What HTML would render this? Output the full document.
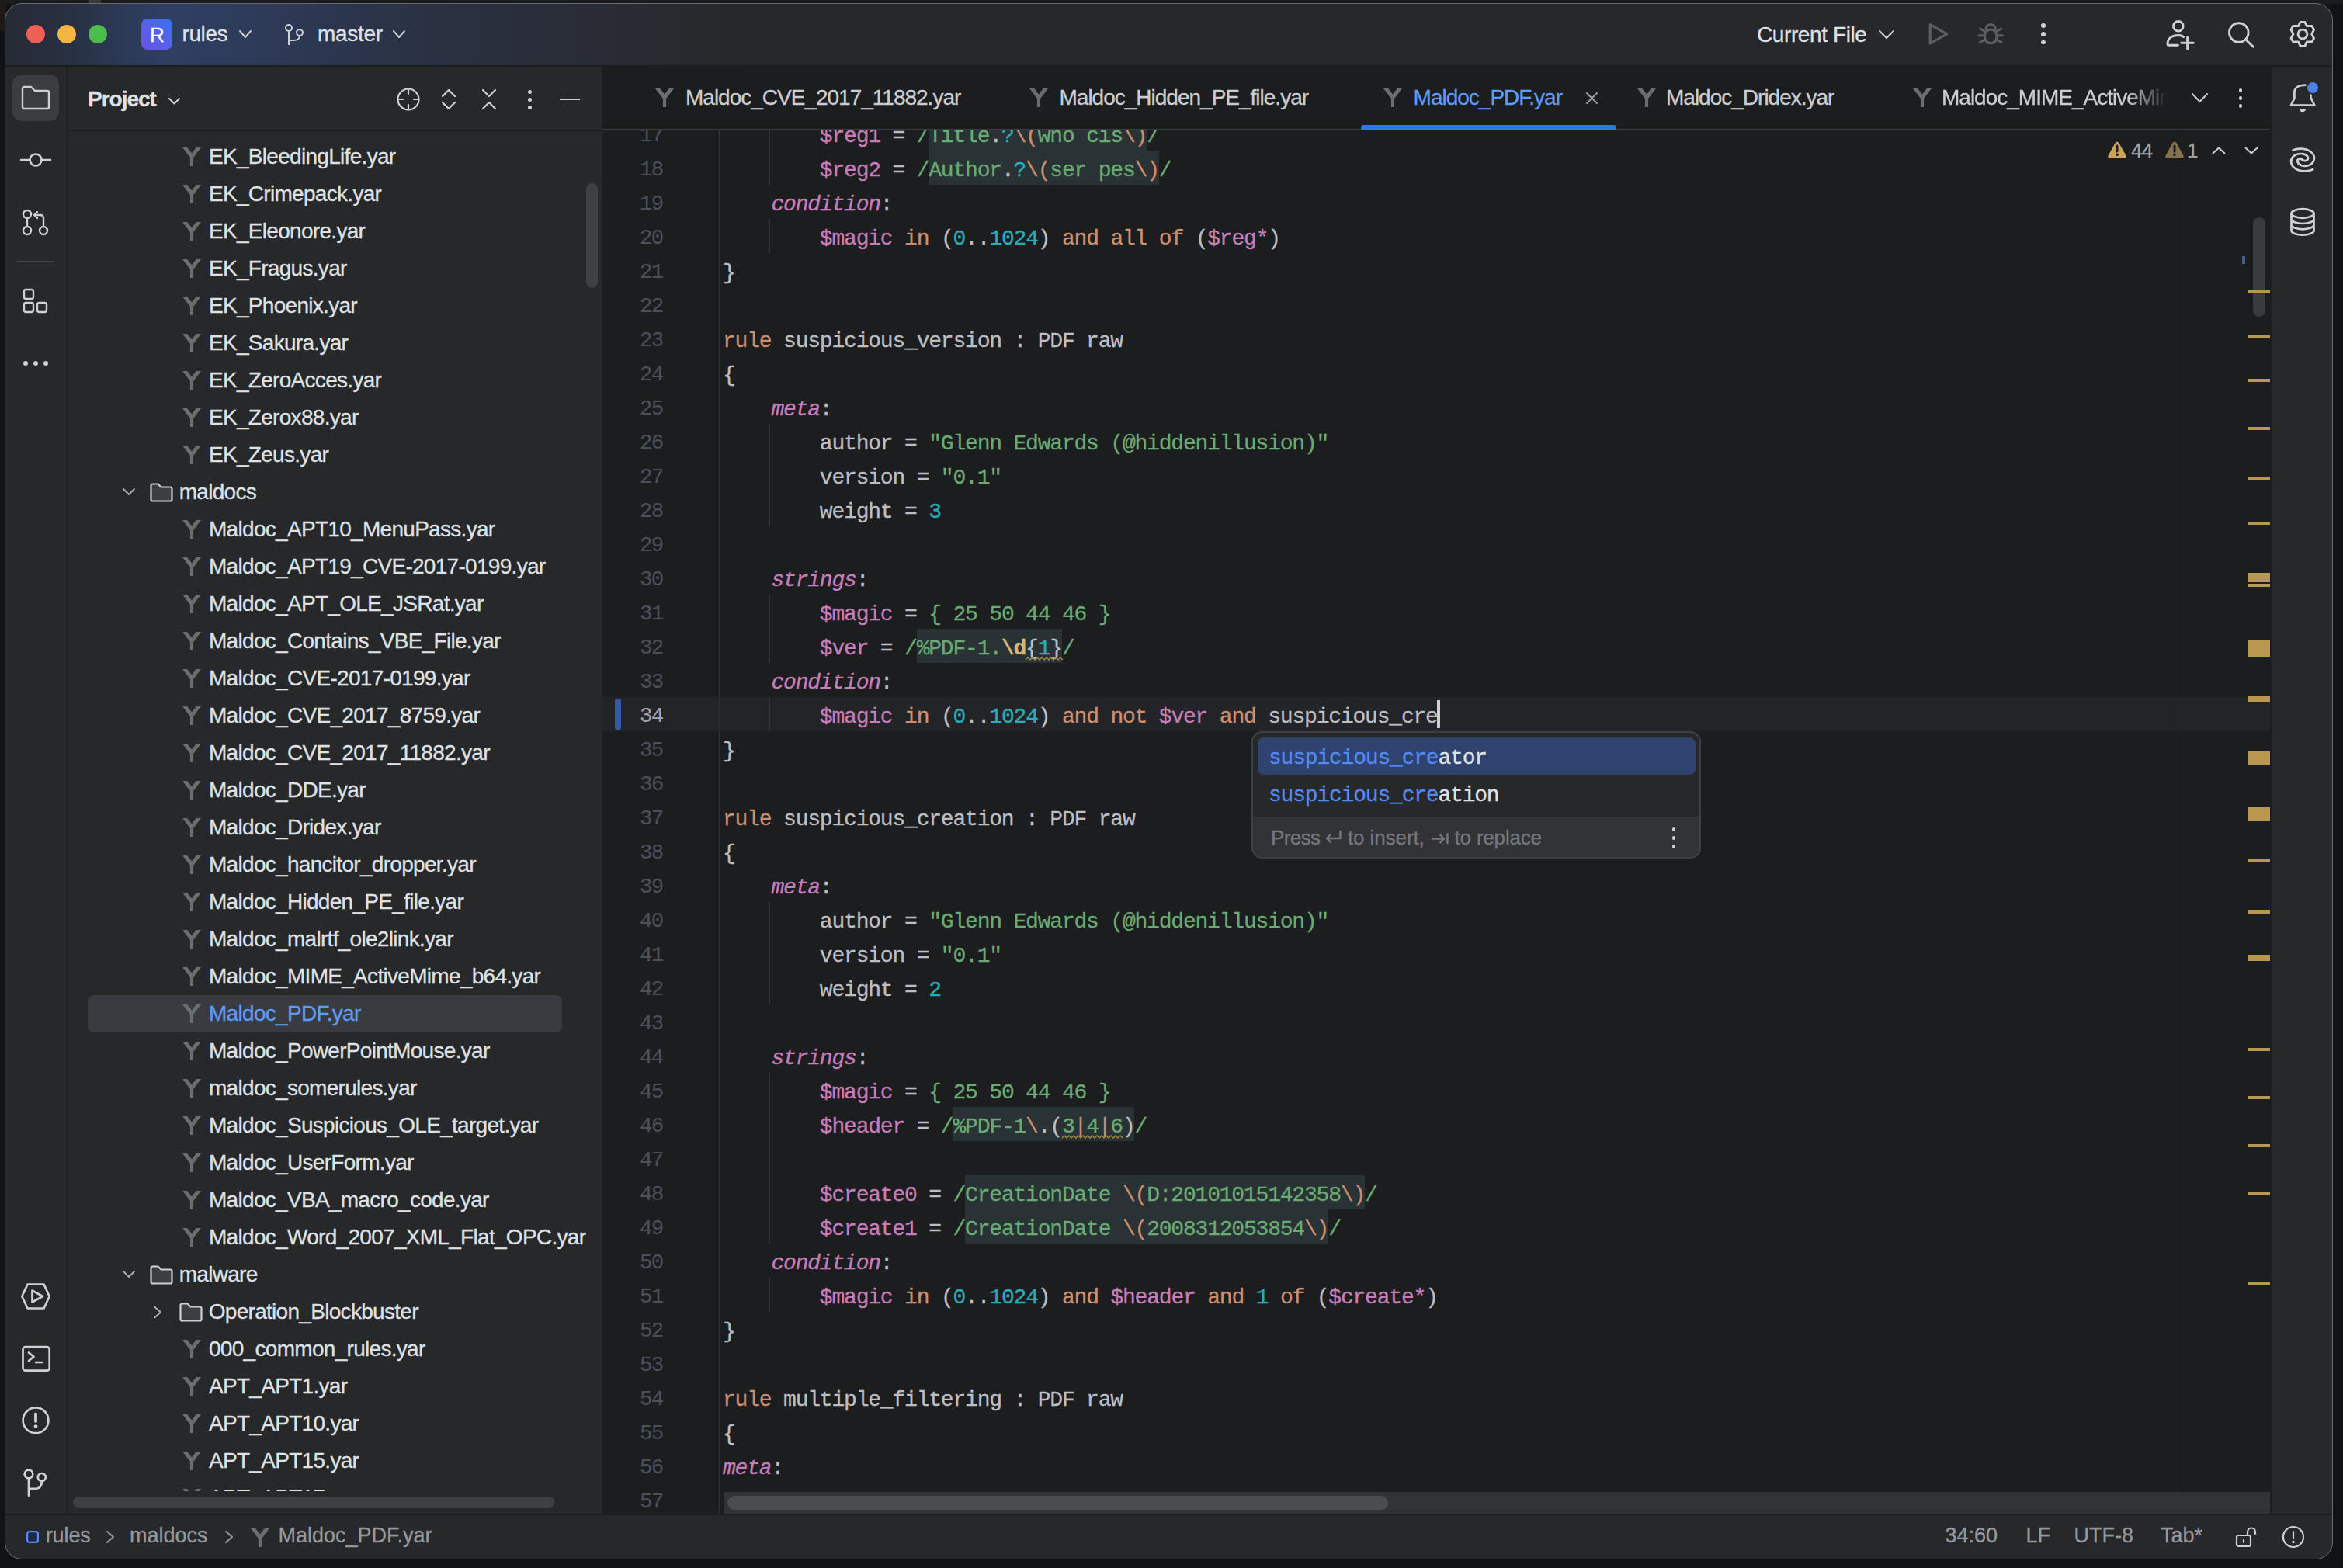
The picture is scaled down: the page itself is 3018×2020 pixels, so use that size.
<!DOCTYPE html><html><head><meta charset="utf-8"><style>
html,body{margin:0;padding:0;}
body{width:3018px;height:2020px;position:relative;overflow:hidden;background:#111213;font-family:"Liberation Sans",sans-serif;-webkit-text-stroke:0.3px currentColor;}
.abs{position:absolute;}
svg{position:absolute;overflow:visible;}
</style></head><body>
<div class="abs" style="left:0;top:0;width:3018px;height:5px;background:#1a1b1d"></div>
<div class="abs" style="left:0;top:0;width:8px;height:40px;background:#1f1a19"></div>
<div class="abs" style="left:114px;top:0;width:16px;height:4px;background:#3a3a3c"></div>
<div class="abs" style="left:0;top:0;width:3018px;height:2020px;clip-path:inset(4px 13px 11px 6px round 22px);background:#27282a">
<div class="abs" style="left:0;top:0;width:3018px;height:84px;background:#27282b"></div>
<div class="abs" style="left:0;top:0;width:3018px;height:84px;background:linear-gradient(90deg,#262a33 0px,#283042 90px,#2d3b5a 170px,#2f3f62 215px,#2e3c5c 300px,#2c364f 420px,#2a3142 560px,#292d37 720px,rgba(43,45,48,0) 950px)"></div>
<div class="abs" style="left:0;top:84px;width:3018px;height:2px;background:#1c1d1f"></div>
<div class="abs" style="left:34px;top:32px;width:24px;height:24px;border-radius:50%;background:#ef5f56"></div>
<div class="abs" style="left:74px;top:32px;width:24px;height:24px;border-radius:50%;background:#f5b543"></div>
<div class="abs" style="left:114px;top:32px;width:24px;height:24px;border-radius:50%;background:#4cbc4a"></div>
<div class="abs" style="left:182px;top:24px;width:40px;height:40px;border-radius:8px;background:linear-gradient(225deg,#3574f0 0%,#5b5ee6 60%,#6b52e0 100%)"></div>
<div style="position:absolute;left:193px;top:27.99px;height:34px;line-height:34px;font-family:'Liberation Sans', sans-serif;font-size:26px;color:#ffffff;font-weight:normal;white-space:pre;letter-spacing:-0.65px;width:18px;text-align:center">R</div>
<div style="position:absolute;left:234.5px;top:26.30px;height:36px;line-height:36px;font-family:'Liberation Sans', sans-serif;font-size:28px;color:#dfe1e5;font-weight:normal;white-space:pre;letter-spacing:-0.4px;">rules</div>
<svg style="left:308px;top:39px" width="16" height="10"><polyline points="1,1 8.0,9 15,1" fill="none" stroke="#ced0d6" stroke-width="2" stroke-linecap="round" stroke-linejoin="round"/></svg>
<svg style="left:366px;top:30px" width="28" height="30" viewBox="0 0 28 30"><circle cx="6" cy="6" r="4" fill="none" stroke="#ced0d6" stroke-width="2"/><circle cx="20" cy="12" r="4" fill="none" stroke="#ced0d6" stroke-width="2"/><path d="M6 10 V28 M6 22 H12 Q20 22 20 16" fill="none" stroke="#ced0d6" stroke-width="2"/></svg>
<div style="position:absolute;left:409px;top:26.30px;height:36px;line-height:36px;font-family:'Liberation Sans', sans-serif;font-size:28px;color:#dfe1e5;font-weight:normal;white-space:pre;letter-spacing:-0.3px;">master</div>
<svg style="left:506px;top:39px" width="16" height="10"><polyline points="1,1 8.0,9 15,1" fill="none" stroke="#ced0d6" stroke-width="2" stroke-linecap="round" stroke-linejoin="round"/></svg>
<div style="position:absolute;left:2263px;top:27.10px;height:36px;line-height:36px;font-family:'Liberation Sans', sans-serif;font-size:28px;color:#dfe1e5;font-weight:normal;white-space:pre;letter-spacing:-0.4px;">Current File</div>
<svg style="left:2420px;top:39px" width="20" height="11"><polyline points="1,1 10.0,10 19,1" fill="none" stroke="#ced0d6" stroke-width="2" stroke-linecap="round" stroke-linejoin="round"/></svg>
<svg style="left:2482px;top:28px" width="30" height="32"><path d="M4.2 3.6 L25.7 15.8 L4.2 28 Z" fill="none" stroke="#5c5e62" stroke-width="3.1" stroke-linejoin="round"/></svg>
<svg style="left:2546px;top:27px" width="36" height="34" viewBox="0 0 36 34"><g fill="none" stroke="#5c5e62" stroke-width="3" stroke-linecap="round">
<path d="M12.2 10.5 A6 6 0 0 1 24.2 10.5"/><rect x="10.6" y="11" width="15.2" height="17.8" rx="7.6"/>
<path d="M4.3 10 L10 13 M3 18.8 H9.5 M4 27.7 L10 24.5 M32.1 10 L26.4 13 M33.4 18.8 H26.9 M32.4 27.7 L26.4 24.5"/></g></svg>
<div class="abs" style="left:2629.2px;top:30.400000000000002px;width:5.6px;height:5.6px;border-radius:50%;background:#ced0d6"></div>
<div class="abs" style="left:2629.2px;top:41.2px;width:5.6px;height:5.6px;border-radius:50%;background:#ced0d6"></div>
<div class="abs" style="left:2629.2px;top:51.900000000000006px;width:5.6px;height:5.6px;border-radius:50%;background:#ced0d6"></div>
<svg style="left:2786px;top:24px" width="44" height="44" viewBox="0 0 44 44"><g fill="none" stroke="#ced0d6" stroke-width="2.9" stroke-linecap="round" stroke-linejoin="round">
<circle cx="19.8" cy="9.8" r="6.3"/><path d="M19.5 34.2 H7.5 Q6 34.2 6 32.7 C6 26 11 21.5 20 21.5 Q24 21.5 26.5 23.5"/><path d="M31.6 23.9 V39 M23.7 31.2 H39.4"/></g></svg>
<svg style="left:2866px;top:24px" width="40" height="40" viewBox="0 0 40 40"><g fill="none" stroke="#ced0d6" stroke-width="2.9" stroke-linecap="round">
<circle cx="17.8" cy="18" r="12.3"/><path d="M27 27.3 L36.3 36.3"/></g></svg>
<svg style="left:2946px;top:24px" width="40" height="40" viewBox="0 0 40 40"><polygon points="17.05,4.42 22.85,4.42 25.41,9.55 31.97,9.55 34.53,14.30 31.78,19.90 34.53,25.51 31.97,29.88 25.41,29.88 22.85,35.39 17.05,35.39 14.49,29.88 7.65,29.88 5.09,25.51 7.94,19.90 5.09,14.30 7.65,9.55 14.49,9.55" fill="none" stroke="#ced0d6" stroke-width="2.9" stroke-linejoin="round"/><circle cx="20" cy="20" r="5.9" fill="none" stroke="#ced0d6" stroke-width="2.9"/></svg>
<div class="abs" style="left:86px;top:86px;width:2px;height:1866px;background:#1c1d1f"></div>
<div class="abs" style="left:16px;top:96px;width:60px;height:60px;border-radius:12px;background:#3b3c3f"></div>
<svg style="left:27px;top:110px" width="38" height="32" viewBox="0 0 38 32"><path d="M2 4 Q2 2 4 2 H13 L18 7 H34 Q36 7 36 9 V28 Q36 30 34 30 H4 Q2 30 2 28 Z" fill="none" stroke="#ced0d6" stroke-width="2.4" stroke-linejoin="round"/></svg>
<svg style="left:24px;top:194px" width="44" height="24"><circle cx="22" cy="12" r="7.5" fill="none" stroke="#ced0d6" stroke-width="2.6"/><path d="M3 12 H14.5 M29.5 12 H41" stroke="#ced0d6" stroke-width="2.6" stroke-linecap="round"/></svg>
<svg style="left:28px;top:269px" width="36" height="36" viewBox="0 0 36 36"><g fill="none" stroke="#ced0d6" stroke-width="2.4" stroke-linecap="round" stroke-linejoin="round">
<circle cx="7" cy="7" r="5"/><circle cx="7" cy="28" r="5"/><circle cx="28" cy="28" r="5"/><path d="M7 12 V23"/><path d="M28 23 V12 Q28 8 24 8 H17 M20 4 L16 8 L20 12"/></g></svg>
<div class="abs" style="left:22px;top:336px;width:48px;height:2px;background:#43454a"></div>
<svg style="left:28px;top:370px" width="36" height="36" viewBox="0 0 36 36"><g fill="none" stroke="#ced0d6" stroke-width="2.4" stroke-linejoin="round">
<rect x="3" y="3" width="12" height="12" rx="2.5"/><rect x="3" y="20" width="12" height="12" rx="2.5"/><rect x="20" y="20" width="12" height="12" rx="2.5"/></g></svg>
<div class="abs" style="left:30px;top:464.5px;width:6px;height:6px;border-radius:50%;background:#ced0d6"></div>
<div class="abs" style="left:43px;top:464.5px;width:6px;height:6px;border-radius:50%;background:#ced0d6"></div>
<div class="abs" style="left:56px;top:464.5px;width:6px;height:6px;border-radius:50%;background:#ced0d6"></div>
<svg style="left:24px;top:1650px" width="44" height="40" viewBox="0 0 44 40"><g fill="none" stroke="#ced0d6" stroke-width="2.7" stroke-linejoin="round" stroke-linecap="round">
<path d="M4.3 20 L11.5 4.5 H32.5 L39.7 20 L32.5 35.5 H11.5 Z"/><path d="M17.5 12.5 L31 20 L17.5 27.5 Z"/></g></svg>
<svg style="left:26px;top:1732px" width="40" height="38" viewBox="0 0 40 38"><g fill="none" stroke="#ced0d6" stroke-width="2.7" stroke-linecap="round" stroke-linejoin="round">
<rect x="3.5" y="3.2" width="34.2" height="30.5" rx="3.5"/><path d="M11 10.5 L17.5 15.8 L11 21 M20 23 H28.5"/></g></svg>
<svg style="left:26px;top:1810px" width="40" height="40" viewBox="0 0 40 40"><circle cx="20" cy="19.8" r="16.4" fill="none" stroke="#ced0d6" stroke-width="2.7"/><path d="M20 11.5 V21" stroke="#ced0d6" stroke-width="3.8" stroke-linecap="round"/><circle cx="20" cy="27.6" r="2.4" fill="#ced0d6"/></svg>
<svg style="left:26px;top:1888px" width="40" height="44" viewBox="0 0 40 44"><g fill="none" stroke="#ced0d6" stroke-width="2.7" stroke-linecap="round">
<circle cx="11" cy="11" r="5.3"/><circle cx="27.8" cy="15" r="5"/><path d="M11 16.3 V38.7 M27.8 20 Q27.8 29.8 20 29.8 H11"/></g></svg>
<div class="abs" style="left:88px;top:167px;width:688px;height:2px;background:#1c1d1f"></div>
<div style="position:absolute;left:113px;top:110.10px;height:36px;line-height:36px;font-family:'Liberation Sans', sans-serif;font-size:28px;color:#dfe1e5;font-weight:bold;white-space:pre;letter-spacing:-1.0px;">Project</div>
<svg style="left:217px;top:126px" width="15" height="8.5"><polyline points="1,1 7.5,7.5 14,1" fill="none" stroke="#ced0d6" stroke-width="2" stroke-linecap="round" stroke-linejoin="round"/></svg>
<svg style="left:510px;top:112px" width="32" height="32" viewBox="0 0 32 32"><g fill="none" stroke="#ced0d6" stroke-width="2.2" stroke-linecap="round">
<circle cx="16" cy="16" r="13.5"/><path d="M16 3 V9 M16 23 V29 M3 16 H9 M23 16 H29"/></g></svg>
<svg style="left:568px;top:113px" width="20" height="30" viewBox="0 0 20 30"><g fill="none" stroke="#ced0d6" stroke-width="2.2" stroke-linecap="round" stroke-linejoin="round">
<path d="M2 11 L10 3 L18 11 M2 19 L10 27 L18 19"/></g></svg>
<svg style="left:620px;top:114px" width="20" height="28" viewBox="0 0 20 28"><g fill="none" stroke="#ced0d6" stroke-width="2.2" stroke-linecap="round" stroke-linejoin="round">
<path d="M2 2 L10 10 L18 2 M2 26 L10 18 L18 26"/></g></svg>
<div class="abs" style="left:679.5px;top:115.5px;width:5px;height:5px;border-radius:50%;background:#ced0d6"></div>
<div class="abs" style="left:679.5px;top:125.5px;width:5px;height:5px;border-radius:50%;background:#ced0d6"></div>
<div class="abs" style="left:679.5px;top:135.5px;width:5px;height:5px;border-radius:50%;background:#ced0d6"></div>
<div class="abs" style="left:721px;top:127px;width:26px;height:2.4px;background:#ced0d6"></div>
<div class="abs" style="left:88px;top:169px;width:688px;height:1752px;overflow:hidden">
<svg style="left:146.5px;top:21px" width="24" height="24" viewBox="0 0 24 24"><path d="M0 0 H6.2 L12 7.6 L17.8 0 H24 L14.1 13 V24 H9.9 V13 Z" fill="#6c6d6f"/></svg>
<div style="position:absolute;left:181px;top:14.80px;height:36px;line-height:36px;font-family:'Liberation Sans', sans-serif;font-size:28px;color:#dfe1e5;font-weight:normal;white-space:pre;letter-spacing:-0.7px;">EK_BleedingLife.yar</div>
<svg style="left:146.5px;top:69px" width="24" height="24" viewBox="0 0 24 24"><path d="M0 0 H6.2 L12 7.6 L17.8 0 H24 L14.1 13 V24 H9.9 V13 Z" fill="#6c6d6f"/></svg>
<div style="position:absolute;left:181px;top:62.80px;height:36px;line-height:36px;font-family:'Liberation Sans', sans-serif;font-size:28px;color:#dfe1e5;font-weight:normal;white-space:pre;letter-spacing:-0.7px;">EK_Crimepack.yar</div>
<svg style="left:146.5px;top:117px" width="24" height="24" viewBox="0 0 24 24"><path d="M0 0 H6.2 L12 7.6 L17.8 0 H24 L14.1 13 V24 H9.9 V13 Z" fill="#6c6d6f"/></svg>
<div style="position:absolute;left:181px;top:110.80px;height:36px;line-height:36px;font-family:'Liberation Sans', sans-serif;font-size:28px;color:#dfe1e5;font-weight:normal;white-space:pre;letter-spacing:-0.7px;">EK_Eleonore.yar</div>
<svg style="left:146.5px;top:165px" width="24" height="24" viewBox="0 0 24 24"><path d="M0 0 H6.2 L12 7.6 L17.8 0 H24 L14.1 13 V24 H9.9 V13 Z" fill="#6c6d6f"/></svg>
<div style="position:absolute;left:181px;top:158.80px;height:36px;line-height:36px;font-family:'Liberation Sans', sans-serif;font-size:28px;color:#dfe1e5;font-weight:normal;white-space:pre;letter-spacing:-0.7px;">EK_Fragus.yar</div>
<svg style="left:146.5px;top:213px" width="24" height="24" viewBox="0 0 24 24"><path d="M0 0 H6.2 L12 7.6 L17.8 0 H24 L14.1 13 V24 H9.9 V13 Z" fill="#6c6d6f"/></svg>
<div style="position:absolute;left:181px;top:206.80px;height:36px;line-height:36px;font-family:'Liberation Sans', sans-serif;font-size:28px;color:#dfe1e5;font-weight:normal;white-space:pre;letter-spacing:-0.7px;">EK_Phoenix.yar</div>
<svg style="left:146.5px;top:261px" width="24" height="24" viewBox="0 0 24 24"><path d="M0 0 H6.2 L12 7.6 L17.8 0 H24 L14.1 13 V24 H9.9 V13 Z" fill="#6c6d6f"/></svg>
<div style="position:absolute;left:181px;top:254.80px;height:36px;line-height:36px;font-family:'Liberation Sans', sans-serif;font-size:28px;color:#dfe1e5;font-weight:normal;white-space:pre;letter-spacing:-0.7px;">EK_Sakura.yar</div>
<svg style="left:146.5px;top:309px" width="24" height="24" viewBox="0 0 24 24"><path d="M0 0 H6.2 L12 7.6 L17.8 0 H24 L14.1 13 V24 H9.9 V13 Z" fill="#6c6d6f"/></svg>
<div style="position:absolute;left:181px;top:302.80px;height:36px;line-height:36px;font-family:'Liberation Sans', sans-serif;font-size:28px;color:#dfe1e5;font-weight:normal;white-space:pre;letter-spacing:-0.7px;">EK_ZeroAcces.yar</div>
<svg style="left:146.5px;top:357px" width="24" height="24" viewBox="0 0 24 24"><path d="M0 0 H6.2 L12 7.6 L17.8 0 H24 L14.1 13 V24 H9.9 V13 Z" fill="#6c6d6f"/></svg>
<div style="position:absolute;left:181px;top:350.80px;height:36px;line-height:36px;font-family:'Liberation Sans', sans-serif;font-size:28px;color:#dfe1e5;font-weight:normal;white-space:pre;letter-spacing:-0.7px;">EK_Zerox88.yar</div>
<svg style="left:146.5px;top:405px" width="24" height="24" viewBox="0 0 24 24"><path d="M0 0 H6.2 L12 7.6 L17.8 0 H24 L14.1 13 V24 H9.9 V13 Z" fill="#6c6d6f"/></svg>
<div style="position:absolute;left:181px;top:398.80px;height:36px;line-height:36px;font-family:'Liberation Sans', sans-serif;font-size:28px;color:#dfe1e5;font-weight:normal;white-space:pre;letter-spacing:-0.7px;">EK_Zeus.yar</div>
<svg style="left:70px;top:460px" width="16" height="9"><polyline points="1,1 8.0,8 15,1" fill="none" stroke="#a9acb1" stroke-width="2" stroke-linecap="round" stroke-linejoin="round"/></svg>
<svg style="left:105px;top:452.5px" width="30" height="25" viewBox="0 0 30 25"><path d="M1.5 3.5 Q1.5 1.5 3.5 1.5 H10.5 L14.5 5.5 H26.5 Q28.5 5.5 28.5 7.5 V21.5 Q28.5 23.5 26.5 23.5 H3.5 Q1.5 23.5 1.5 21.5 Z" fill="#3c3e42" stroke="#ced0d6" stroke-width="2.2" stroke-linejoin="round"/></svg>
<div style="position:absolute;left:142.7px;top:446.80px;height:36px;line-height:36px;font-family:'Liberation Sans', sans-serif;font-size:28px;color:#dfe1e5;font-weight:normal;white-space:pre;letter-spacing:-0.7px;">maldocs</div>
<svg style="left:146.5px;top:501px" width="24" height="24" viewBox="0 0 24 24"><path d="M0 0 H6.2 L12 7.6 L17.8 0 H24 L14.1 13 V24 H9.9 V13 Z" fill="#6c6d6f"/></svg>
<div style="position:absolute;left:181px;top:494.80px;height:36px;line-height:36px;font-family:'Liberation Sans', sans-serif;font-size:28px;color:#dfe1e5;font-weight:normal;white-space:pre;letter-spacing:-0.7px;">Maldoc_APT10_MenuPass.yar</div>
<svg style="left:146.5px;top:549px" width="24" height="24" viewBox="0 0 24 24"><path d="M0 0 H6.2 L12 7.6 L17.8 0 H24 L14.1 13 V24 H9.9 V13 Z" fill="#6c6d6f"/></svg>
<div style="position:absolute;left:181px;top:542.80px;height:36px;line-height:36px;font-family:'Liberation Sans', sans-serif;font-size:28px;color:#dfe1e5;font-weight:normal;white-space:pre;letter-spacing:-0.7px;">Maldoc_APT19_CVE-2017-0199.yar</div>
<svg style="left:146.5px;top:597px" width="24" height="24" viewBox="0 0 24 24"><path d="M0 0 H6.2 L12 7.6 L17.8 0 H24 L14.1 13 V24 H9.9 V13 Z" fill="#6c6d6f"/></svg>
<div style="position:absolute;left:181px;top:590.80px;height:36px;line-height:36px;font-family:'Liberation Sans', sans-serif;font-size:28px;color:#dfe1e5;font-weight:normal;white-space:pre;letter-spacing:-0.7px;">Maldoc_APT_OLE_JSRat.yar</div>
<svg style="left:146.5px;top:645px" width="24" height="24" viewBox="0 0 24 24"><path d="M0 0 H6.2 L12 7.6 L17.8 0 H24 L14.1 13 V24 H9.9 V13 Z" fill="#6c6d6f"/></svg>
<div style="position:absolute;left:181px;top:638.80px;height:36px;line-height:36px;font-family:'Liberation Sans', sans-serif;font-size:28px;color:#dfe1e5;font-weight:normal;white-space:pre;letter-spacing:-0.7px;">Maldoc_Contains_VBE_File.yar</div>
<svg style="left:146.5px;top:693px" width="24" height="24" viewBox="0 0 24 24"><path d="M0 0 H6.2 L12 7.6 L17.8 0 H24 L14.1 13 V24 H9.9 V13 Z" fill="#6c6d6f"/></svg>
<div style="position:absolute;left:181px;top:686.80px;height:36px;line-height:36px;font-family:'Liberation Sans', sans-serif;font-size:28px;color:#dfe1e5;font-weight:normal;white-space:pre;letter-spacing:-0.7px;">Maldoc_CVE-2017-0199.yar</div>
<svg style="left:146.5px;top:741px" width="24" height="24" viewBox="0 0 24 24"><path d="M0 0 H6.2 L12 7.6 L17.8 0 H24 L14.1 13 V24 H9.9 V13 Z" fill="#6c6d6f"/></svg>
<div style="position:absolute;left:181px;top:734.80px;height:36px;line-height:36px;font-family:'Liberation Sans', sans-serif;font-size:28px;color:#dfe1e5;font-weight:normal;white-space:pre;letter-spacing:-0.7px;">Maldoc_CVE_2017_8759.yar</div>
<svg style="left:146.5px;top:789px" width="24" height="24" viewBox="0 0 24 24"><path d="M0 0 H6.2 L12 7.6 L17.8 0 H24 L14.1 13 V24 H9.9 V13 Z" fill="#6c6d6f"/></svg>
<div style="position:absolute;left:181px;top:782.80px;height:36px;line-height:36px;font-family:'Liberation Sans', sans-serif;font-size:28px;color:#dfe1e5;font-weight:normal;white-space:pre;letter-spacing:-0.7px;">Maldoc_CVE_2017_11882.yar</div>
<svg style="left:146.5px;top:837px" width="24" height="24" viewBox="0 0 24 24"><path d="M0 0 H6.2 L12 7.6 L17.8 0 H24 L14.1 13 V24 H9.9 V13 Z" fill="#6c6d6f"/></svg>
<div style="position:absolute;left:181px;top:830.80px;height:36px;line-height:36px;font-family:'Liberation Sans', sans-serif;font-size:28px;color:#dfe1e5;font-weight:normal;white-space:pre;letter-spacing:-0.7px;">Maldoc_DDE.yar</div>
<svg style="left:146.5px;top:885px" width="24" height="24" viewBox="0 0 24 24"><path d="M0 0 H6.2 L12 7.6 L17.8 0 H24 L14.1 13 V24 H9.9 V13 Z" fill="#6c6d6f"/></svg>
<div style="position:absolute;left:181px;top:878.80px;height:36px;line-height:36px;font-family:'Liberation Sans', sans-serif;font-size:28px;color:#dfe1e5;font-weight:normal;white-space:pre;letter-spacing:-0.7px;">Maldoc_Dridex.yar</div>
<svg style="left:146.5px;top:933px" width="24" height="24" viewBox="0 0 24 24"><path d="M0 0 H6.2 L12 7.6 L17.8 0 H24 L14.1 13 V24 H9.9 V13 Z" fill="#6c6d6f"/></svg>
<div style="position:absolute;left:181px;top:926.80px;height:36px;line-height:36px;font-family:'Liberation Sans', sans-serif;font-size:28px;color:#dfe1e5;font-weight:normal;white-space:pre;letter-spacing:-0.7px;">Maldoc_hancitor_dropper.yar</div>
<svg style="left:146.5px;top:981px" width="24" height="24" viewBox="0 0 24 24"><path d="M0 0 H6.2 L12 7.6 L17.8 0 H24 L14.1 13 V24 H9.9 V13 Z" fill="#6c6d6f"/></svg>
<div style="position:absolute;left:181px;top:974.80px;height:36px;line-height:36px;font-family:'Liberation Sans', sans-serif;font-size:28px;color:#dfe1e5;font-weight:normal;white-space:pre;letter-spacing:-0.7px;">Maldoc_Hidden_PE_file.yar</div>
<svg style="left:146.5px;top:1029px" width="24" height="24" viewBox="0 0 24 24"><path d="M0 0 H6.2 L12 7.6 L17.8 0 H24 L14.1 13 V24 H9.9 V13 Z" fill="#6c6d6f"/></svg>
<div style="position:absolute;left:181px;top:1022.80px;height:36px;line-height:36px;font-family:'Liberation Sans', sans-serif;font-size:28px;color:#dfe1e5;font-weight:normal;white-space:pre;letter-spacing:-0.7px;">Maldoc_malrtf_ole2link.yar</div>
<svg style="left:146.5px;top:1077px" width="24" height="24" viewBox="0 0 24 24"><path d="M0 0 H6.2 L12 7.6 L17.8 0 H24 L14.1 13 V24 H9.9 V13 Z" fill="#6c6d6f"/></svg>
<div style="position:absolute;left:181px;top:1070.80px;height:36px;line-height:36px;font-family:'Liberation Sans', sans-serif;font-size:28px;color:#dfe1e5;font-weight:normal;white-space:pre;letter-spacing:-0.7px;">Maldoc_MIME_ActiveMime_b64.yar</div>
<div class="abs" style="left:24.5px;top:1113px;width:611px;height:48px;border-radius:8px;background:#393b40"></div>
<svg style="left:146.5px;top:1125px" width="24" height="24" viewBox="0 0 24 24"><path d="M0 0 H6.2 L12 7.6 L17.8 0 H24 L14.1 13 V24 H9.9 V13 Z" fill="#6c6d6f"/></svg>
<div style="position:absolute;left:181px;top:1118.80px;height:36px;line-height:36px;font-family:'Liberation Sans', sans-serif;font-size:28px;color:#5e9cf5;font-weight:normal;white-space:pre;letter-spacing:-0.7px;">Maldoc_PDF.yar</div>
<svg style="left:146.5px;top:1173px" width="24" height="24" viewBox="0 0 24 24"><path d="M0 0 H6.2 L12 7.6 L17.8 0 H24 L14.1 13 V24 H9.9 V13 Z" fill="#6c6d6f"/></svg>
<div style="position:absolute;left:181px;top:1166.80px;height:36px;line-height:36px;font-family:'Liberation Sans', sans-serif;font-size:28px;color:#dfe1e5;font-weight:normal;white-space:pre;letter-spacing:-0.7px;">Maldoc_PowerPointMouse.yar</div>
<svg style="left:146.5px;top:1221px" width="24" height="24" viewBox="0 0 24 24"><path d="M0 0 H6.2 L12 7.6 L17.8 0 H24 L14.1 13 V24 H9.9 V13 Z" fill="#6c6d6f"/></svg>
<div style="position:absolute;left:181px;top:1214.80px;height:36px;line-height:36px;font-family:'Liberation Sans', sans-serif;font-size:28px;color:#dfe1e5;font-weight:normal;white-space:pre;letter-spacing:-0.7px;">maldoc_somerules.yar</div>
<svg style="left:146.5px;top:1269px" width="24" height="24" viewBox="0 0 24 24"><path d="M0 0 H6.2 L12 7.6 L17.8 0 H24 L14.1 13 V24 H9.9 V13 Z" fill="#6c6d6f"/></svg>
<div style="position:absolute;left:181px;top:1262.80px;height:36px;line-height:36px;font-family:'Liberation Sans', sans-serif;font-size:28px;color:#dfe1e5;font-weight:normal;white-space:pre;letter-spacing:-0.7px;">Maldoc_Suspicious_OLE_target.yar</div>
<svg style="left:146.5px;top:1317px" width="24" height="24" viewBox="0 0 24 24"><path d="M0 0 H6.2 L12 7.6 L17.8 0 H24 L14.1 13 V24 H9.9 V13 Z" fill="#6c6d6f"/></svg>
<div style="position:absolute;left:181px;top:1310.80px;height:36px;line-height:36px;font-family:'Liberation Sans', sans-serif;font-size:28px;color:#dfe1e5;font-weight:normal;white-space:pre;letter-spacing:-0.7px;">Maldoc_UserForm.yar</div>
<svg style="left:146.5px;top:1365px" width="24" height="24" viewBox="0 0 24 24"><path d="M0 0 H6.2 L12 7.6 L17.8 0 H24 L14.1 13 V24 H9.9 V13 Z" fill="#6c6d6f"/></svg>
<div style="position:absolute;left:181px;top:1358.80px;height:36px;line-height:36px;font-family:'Liberation Sans', sans-serif;font-size:28px;color:#dfe1e5;font-weight:normal;white-space:pre;letter-spacing:-0.7px;">Maldoc_VBA_macro_code.yar</div>
<svg style="left:146.5px;top:1413px" width="24" height="24" viewBox="0 0 24 24"><path d="M0 0 H6.2 L12 7.6 L17.8 0 H24 L14.1 13 V24 H9.9 V13 Z" fill="#6c6d6f"/></svg>
<div style="position:absolute;left:181px;top:1406.80px;height:36px;line-height:36px;font-family:'Liberation Sans', sans-serif;font-size:28px;color:#dfe1e5;font-weight:normal;white-space:pre;letter-spacing:-0.7px;">Maldoc_Word_2007_XML_Flat_OPC.yar</div>
<svg style="left:70px;top:1468px" width="16" height="9"><polyline points="1,1 8.0,8 15,1" fill="none" stroke="#a9acb1" stroke-width="2" stroke-linecap="round" stroke-linejoin="round"/></svg>
<svg style="left:105px;top:1460.5px" width="30" height="25" viewBox="0 0 30 25"><path d="M1.5 3.5 Q1.5 1.5 3.5 1.5 H10.5 L14.5 5.5 H26.5 Q28.5 5.5 28.5 7.5 V21.5 Q28.5 23.5 26.5 23.5 H3.5 Q1.5 23.5 1.5 21.5 Z" fill="#3c3e42" stroke="#ced0d6" stroke-width="2.2" stroke-linejoin="round"/></svg>
<div style="position:absolute;left:142.7px;top:1454.80px;height:36px;line-height:36px;font-family:'Liberation Sans', sans-serif;font-size:28px;color:#dfe1e5;font-weight:normal;white-space:pre;letter-spacing:-0.7px;">malware</div>
<svg style="left:109px;top:1513px" width="12" height="17"><polyline points="2,1.5 10,8.5 2,15.5" fill="none" stroke="#a9acb1" stroke-width="2" stroke-linecap="round" stroke-linejoin="round"/></svg>
<svg style="left:143px;top:1508.5px" width="30" height="25" viewBox="0 0 30 25"><path d="M1.5 3.5 Q1.5 1.5 3.5 1.5 H10.5 L14.5 5.5 H26.5 Q28.5 5.5 28.5 7.5 V21.5 Q28.5 23.5 26.5 23.5 H3.5 Q1.5 23.5 1.5 21.5 Z" fill="#3c3e42" stroke="#ced0d6" stroke-width="2.2" stroke-linejoin="round"/></svg>
<div style="position:absolute;left:180.7px;top:1502.80px;height:36px;line-height:36px;font-family:'Liberation Sans', sans-serif;font-size:28px;color:#dfe1e5;font-weight:normal;white-space:pre;letter-spacing:-0.7px;">Operation_Blockbuster</div>
<svg style="left:146.5px;top:1557px" width="24" height="24" viewBox="0 0 24 24"><path d="M0 0 H6.2 L12 7.6 L17.8 0 H24 L14.1 13 V24 H9.9 V13 Z" fill="#6c6d6f"/></svg>
<div style="position:absolute;left:181px;top:1550.80px;height:36px;line-height:36px;font-family:'Liberation Sans', sans-serif;font-size:28px;color:#dfe1e5;font-weight:normal;white-space:pre;letter-spacing:-0.7px;">000_common_rules.yar</div>
<svg style="left:146.5px;top:1605px" width="24" height="24" viewBox="0 0 24 24"><path d="M0 0 H6.2 L12 7.6 L17.8 0 H24 L14.1 13 V24 H9.9 V13 Z" fill="#6c6d6f"/></svg>
<div style="position:absolute;left:181px;top:1598.80px;height:36px;line-height:36px;font-family:'Liberation Sans', sans-serif;font-size:28px;color:#dfe1e5;font-weight:normal;white-space:pre;letter-spacing:-0.7px;">APT_APT1.yar</div>
<svg style="left:146.5px;top:1653px" width="24" height="24" viewBox="0 0 24 24"><path d="M0 0 H6.2 L12 7.6 L17.8 0 H24 L14.1 13 V24 H9.9 V13 Z" fill="#6c6d6f"/></svg>
<div style="position:absolute;left:181px;top:1646.80px;height:36px;line-height:36px;font-family:'Liberation Sans', sans-serif;font-size:28px;color:#dfe1e5;font-weight:normal;white-space:pre;letter-spacing:-0.7px;">APT_APT10.yar</div>
<svg style="left:146.5px;top:1701px" width="24" height="24" viewBox="0 0 24 24"><path d="M0 0 H6.2 L12 7.6 L17.8 0 H24 L14.1 13 V24 H9.9 V13 Z" fill="#6c6d6f"/></svg>
<div style="position:absolute;left:181px;top:1694.80px;height:36px;line-height:36px;font-family:'Liberation Sans', sans-serif;font-size:28px;color:#dfe1e5;font-weight:normal;white-space:pre;letter-spacing:-0.7px;">APT_APT15.yar</div>
<svg style="left:146.5px;top:1749px" width="24" height="24" viewBox="0 0 24 24"><path d="M0 0 H6.2 L12 7.6 L17.8 0 H24 L14.1 13 V24 H9.9 V13 Z" fill="#6c6d6f"/></svg>
<div style="position:absolute;left:181px;top:1742.80px;height:36px;line-height:36px;font-family:'Liberation Sans', sans-serif;font-size:28px;color:#dfe1e5;font-weight:normal;white-space:pre;letter-spacing:-0.7px;">APT_APT17.yar</div>
<div class="abs" style="left:666.5px;top:66.5px;width:15.5px;height:135px;border-radius:8px;background:#3e4043"></div>
</div>
<div class="abs" style="left:94px;top:1928px;width:620px;height:15px;border-radius:8px;background:#3e4043"></div>
<div class="abs" style="left:776px;top:86px;width:2150px;height:1865px;background:#1c1d1f"></div>
<div class="abs" style="left:776px;top:166px;width:2150px;height:2px;background:#393b40"></div>
<svg style="left:844px;top:114px" width="24" height="24" viewBox="0 0 24 24"><path d="M0 0 H6.2 L12 7.6 L17.8 0 H24 L14.1 13 V24 H9.9 V13 Z" fill="#6c6d6f"/></svg>
<div style="position:absolute;left:883px;top:108.30px;height:36px;line-height:36px;font-family:'Liberation Sans', sans-serif;font-size:28px;color:#cbcdd2;font-weight:normal;white-space:pre;letter-spacing:-1.0px;">Maldoc_CVE_2017_11882.yar</div>
<svg style="left:1326px;top:114px" width="24" height="24" viewBox="0 0 24 24"><path d="M0 0 H6.2 L12 7.6 L17.8 0 H24 L14.1 13 V24 H9.9 V13 Z" fill="#6c6d6f"/></svg>
<div style="position:absolute;left:1364.5px;top:108.30px;height:36px;line-height:36px;font-family:'Liberation Sans', sans-serif;font-size:28px;color:#cbcdd2;font-weight:normal;white-space:pre;letter-spacing:-1.0px;">Maldoc_Hidden_PE_file.yar</div>
<svg style="left:1782px;top:114px" width="24" height="24" viewBox="0 0 24 24"><path d="M0 0 H6.2 L12 7.6 L17.8 0 H24 L14.1 13 V24 H9.9 V13 Z" fill="#6c6d6f"/></svg>
<div style="position:absolute;left:1820.6px;top:108.30px;height:36px;line-height:36px;font-family:'Liberation Sans', sans-serif;font-size:28px;color:#5e9cf5;font-weight:normal;white-space:pre;letter-spacing:-1.0px;">Maldoc_PDF.yar</div>
<svg style="left:2108.7px;top:114px" width="24" height="24" viewBox="0 0 24 24"><path d="M0 0 H6.2 L12 7.6 L17.8 0 H24 L14.1 13 V24 H9.9 V13 Z" fill="#6c6d6f"/></svg>
<div style="position:absolute;left:2146px;top:108.30px;height:36px;line-height:36px;font-family:'Liberation Sans', sans-serif;font-size:28px;color:#cbcdd2;font-weight:normal;white-space:pre;letter-spacing:-1.0px;">Maldoc_Dridex.yar</div>
<svg style="left:2463.6px;top:114px" width="24" height="24" viewBox="0 0 24 24"><path d="M0 0 H6.2 L12 7.6 L17.8 0 H24 L14.1 13 V24 H9.9 V13 Z" fill="#6c6d6f"/></svg>
<div class="abs" style="left:2501px;top:100px;width:300px;height:50px;overflow:hidden;-webkit-mask-image:linear-gradient(90deg,#000 80%,transparent 97%)">
<div style="position:absolute;left:0px;top:8.30px;height:36px;line-height:36px;font-family:'Liberation Sans', sans-serif;font-size:28px;color:#cbcdd2;font-weight:normal;white-space:pre;letter-spacing:-1.0px;">Maldoc_MIME_ActiveMime_b64.yar</div>
</div>
<svg style="left:2043px;top:119px" width="15" height="15"><path d="M1 1 L14 14 M14 1 L1 14" stroke="#9a9da3" stroke-width="2" stroke-linecap="round"/></svg>
<div class="abs" style="left:1753px;top:160.5px;width:329px;height:7px;border-radius:4px;background:#3574f0"></div>
<svg style="left:2823px;top:120px" width="21" height="12"><polyline points="1,1 10.5,11 20,1" fill="none" stroke="#ced0d6" stroke-width="2" stroke-linecap="round" stroke-linejoin="round"/></svg>
<div class="abs" style="left:2883.7px;top:114.2px;width:4.6px;height:4.6px;border-radius:50%;background:#ced0d6"></div>
<div class="abs" style="left:2883.7px;top:124.2px;width:4.6px;height:4.6px;border-radius:50%;background:#ced0d6"></div>
<div class="abs" style="left:2883.7px;top:134.2px;width:4.6px;height:4.6px;border-radius:50%;background:#ced0d6"></div>
<div class="abs" style="left:776px;top:168px;width:2150px;height:1783px;overflow:hidden">
<div class="abs" style="left:0;top:730px;width:2148px;height:44px;background:#232428"></div>
<div class="abs" style="left:150px;top:0;width:2px;height:1783px;background:#2f3135"></div>
<div class="abs" style="left:2028.5px;top:0;width:1.5px;height:5px;background:#393b40"></div>
<div class="abs" style="left:2028.5px;top:47px;width:1.5px;height:1783px;background:#35373b"></div>
<div class="abs" style="left:-22.5px;top:-18px;width:100px;height:44px;line-height:44px;text-align:right;font-family:'Liberation Mono', monospace;font-size:27.5px;letter-spacing:-1.8px;-webkit-text-stroke:0.1px currentColor;color:#4b5059"><span style="position:relative;top:3px">17</span></div>
<div class="abs" style="left:420.20px;top:-18px;width:78.00px;height:44px;background:#293335"></div>
<div class="abs" style="left:498.20px;top:-18px;width:15.60px;height:44px;background:#293335"></div>
<div class="abs" style="left:513.80px;top:-18px;width:15.60px;height:44px;background:#293335"></div>
<div class="abs" style="left:529.40px;top:-18px;width:31.20px;height:44px;background:#293335"></div>
<div class="abs" style="left:560.60px;top:-18px;width:109.20px;height:44px;background:#293335"></div>
<div class="abs" style="left:669.80px;top:-18px;width:31.20px;height:44px;background:#293335"></div>
<div class="abs" style="left:155px;top:-14.5px;height:44px;line-height:44px;font-family:'Liberation Mono', monospace;font-size:28px;letter-spacing:-1.2px;white-space:pre;color:#bcbec4"><span style="color:#c77dbb;">        $reg1</span><span style="color:#bcbec4;"> = </span><span style="color:#6aab73;">/</span><span style="color:#6aab73;">Title</span><span style="color:#bcbec4;">.</span><span style="color:#2aacb8;">?</span><span style="color:#cf8e6d;">\(</span><span style="color:#6aab73;">who cis</span><span style="color:#cf8e6d;">\)</span><span style="color:#6aab73;">/</span></div>
<div class="abs" style="left:-22.5px;top:26px;width:100px;height:44px;line-height:44px;text-align:right;font-family:'Liberation Mono', monospace;font-size:27.5px;letter-spacing:-1.8px;-webkit-text-stroke:0.1px currentColor;color:#4b5059"><span style="position:relative;top:3px">18</span></div>
<div class="abs" style="left:420.20px;top:26px;width:93.60px;height:44px;background:#293335"></div>
<div class="abs" style="left:513.80px;top:26px;width:15.60px;height:44px;background:#293335"></div>
<div class="abs" style="left:529.40px;top:26px;width:15.60px;height:44px;background:#293335"></div>
<div class="abs" style="left:545.00px;top:26px;width:31.20px;height:44px;background:#293335"></div>
<div class="abs" style="left:576.20px;top:26px;width:109.20px;height:44px;background:#293335"></div>
<div class="abs" style="left:685.40px;top:26px;width:31.20px;height:44px;background:#293335"></div>
<div class="abs" style="left:155px;top:29.5px;height:44px;line-height:44px;font-family:'Liberation Mono', monospace;font-size:28px;letter-spacing:-1.2px;white-space:pre;color:#bcbec4"><span style="color:#c77dbb;">        $reg2</span><span style="color:#bcbec4;"> = </span><span style="color:#6aab73;">/</span><span style="color:#6aab73;">Author</span><span style="color:#bcbec4;">.</span><span style="color:#2aacb8;">?</span><span style="color:#cf8e6d;">\(</span><span style="color:#6aab73;">ser pes</span><span style="color:#cf8e6d;">\)</span><span style="color:#6aab73;">/</span></div>
<div class="abs" style="left:-22.5px;top:70px;width:100px;height:44px;line-height:44px;text-align:right;font-family:'Liberation Mono', monospace;font-size:27.5px;letter-spacing:-1.8px;-webkit-text-stroke:0.1px currentColor;color:#4b5059"><span style="position:relative;top:3px">19</span></div>
<div class="abs" style="left:155px;top:73.5px;height:44px;line-height:44px;font-family:'Liberation Mono', monospace;font-size:28px;letter-spacing:-1.2px;white-space:pre;color:#bcbec4"><span style="color:#bcbec4;">    </span><span style="color:#c77dbb;font-style:italic;">condition</span><span style="color:#bcbec4;">:</span></div>
<div class="abs" style="left:-22.5px;top:114px;width:100px;height:44px;line-height:44px;text-align:right;font-family:'Liberation Mono', monospace;font-size:27.5px;letter-spacing:-1.8px;-webkit-text-stroke:0.1px currentColor;color:#4b5059"><span style="position:relative;top:3px">20</span></div>
<div class="abs" style="left:155px;top:117.5px;height:44px;line-height:44px;font-family:'Liberation Mono', monospace;font-size:28px;letter-spacing:-1.2px;white-space:pre;color:#bcbec4"><span style="color:#c77dbb;">        $magic</span><span style="color:#bcbec4;"> </span><span style="color:#cf8e6d;">in</span><span style="color:#bcbec4;"> (</span><span style="color:#2aacb8;">0</span><span style="color:#bcbec4;">..</span><span style="color:#2aacb8;">1024</span><span style="color:#bcbec4;">) </span><span style="color:#cf8e6d;">and</span><span style="color:#bcbec4;"> </span><span style="color:#cf8e6d;">all</span><span style="color:#bcbec4;"> </span><span style="color:#cf8e6d;">of</span><span style="color:#bcbec4;"> (</span><span style="color:#c77dbb;">$reg*</span><span style="color:#bcbec4;">)</span></div>
<div class="abs" style="left:-22.5px;top:158px;width:100px;height:44px;line-height:44px;text-align:right;font-family:'Liberation Mono', monospace;font-size:27.5px;letter-spacing:-1.8px;-webkit-text-stroke:0.1px currentColor;color:#4b5059"><span style="position:relative;top:3px">21</span></div>
<div class="abs" style="left:155px;top:161.5px;height:44px;line-height:44px;font-family:'Liberation Mono', monospace;font-size:28px;letter-spacing:-1.2px;white-space:pre;color:#bcbec4"><span style="color:#bcbec4;">}</span></div>
<div class="abs" style="left:-22.5px;top:202px;width:100px;height:44px;line-height:44px;text-align:right;font-family:'Liberation Mono', monospace;font-size:27.5px;letter-spacing:-1.8px;-webkit-text-stroke:0.1px currentColor;color:#4b5059"><span style="position:relative;top:3px">22</span></div>
<div class="abs" style="left:-22.5px;top:246px;width:100px;height:44px;line-height:44px;text-align:right;font-family:'Liberation Mono', monospace;font-size:27.5px;letter-spacing:-1.8px;-webkit-text-stroke:0.1px currentColor;color:#4b5059"><span style="position:relative;top:3px">23</span></div>
<div class="abs" style="left:155px;top:249.5px;height:44px;line-height:44px;font-family:'Liberation Mono', monospace;font-size:28px;letter-spacing:-1.2px;white-space:pre;color:#bcbec4"><span style="color:#cf8e6d;">rule</span><span style="color:#bcbec4;"> suspicious_version : PDF raw</span></div>
<div class="abs" style="left:-22.5px;top:290px;width:100px;height:44px;line-height:44px;text-align:right;font-family:'Liberation Mono', monospace;font-size:27.5px;letter-spacing:-1.8px;-webkit-text-stroke:0.1px currentColor;color:#4b5059"><span style="position:relative;top:3px">24</span></div>
<div class="abs" style="left:155px;top:293.5px;height:44px;line-height:44px;font-family:'Liberation Mono', monospace;font-size:28px;letter-spacing:-1.2px;white-space:pre;color:#bcbec4"><span style="color:#bcbec4;">{</span></div>
<div class="abs" style="left:-22.5px;top:334px;width:100px;height:44px;line-height:44px;text-align:right;font-family:'Liberation Mono', monospace;font-size:27.5px;letter-spacing:-1.8px;-webkit-text-stroke:0.1px currentColor;color:#4b5059"><span style="position:relative;top:3px">25</span></div>
<div class="abs" style="left:155px;top:337.5px;height:44px;line-height:44px;font-family:'Liberation Mono', monospace;font-size:28px;letter-spacing:-1.2px;white-space:pre;color:#bcbec4"><span style="color:#bcbec4;">    </span><span style="color:#c77dbb;font-style:italic;">meta</span><span style="color:#bcbec4;">:</span></div>
<div class="abs" style="left:-22.5px;top:378px;width:100px;height:44px;line-height:44px;text-align:right;font-family:'Liberation Mono', monospace;font-size:27.5px;letter-spacing:-1.8px;-webkit-text-stroke:0.1px currentColor;color:#4b5059"><span style="position:relative;top:3px">26</span></div>
<div class="abs" style="left:155px;top:381.5px;height:44px;line-height:44px;font-family:'Liberation Mono', monospace;font-size:28px;letter-spacing:-1.2px;white-space:pre;color:#bcbec4"><span style="color:#bcbec4;">        author = </span><span style="color:#6aab73;">&quot;Glenn Edwards (@hiddenillusion)&quot;</span></div>
<div class="abs" style="left:-22.5px;top:422px;width:100px;height:44px;line-height:44px;text-align:right;font-family:'Liberation Mono', monospace;font-size:27.5px;letter-spacing:-1.8px;-webkit-text-stroke:0.1px currentColor;color:#4b5059"><span style="position:relative;top:3px">27</span></div>
<div class="abs" style="left:155px;top:425.5px;height:44px;line-height:44px;font-family:'Liberation Mono', monospace;font-size:28px;letter-spacing:-1.2px;white-space:pre;color:#bcbec4"><span style="color:#bcbec4;">        version = </span><span style="color:#6aab73;">&quot;0.1&quot;</span></div>
<div class="abs" style="left:-22.5px;top:466px;width:100px;height:44px;line-height:44px;text-align:right;font-family:'Liberation Mono', monospace;font-size:27.5px;letter-spacing:-1.8px;-webkit-text-stroke:0.1px currentColor;color:#4b5059"><span style="position:relative;top:3px">28</span></div>
<div class="abs" style="left:155px;top:469.5px;height:44px;line-height:44px;font-family:'Liberation Mono', monospace;font-size:28px;letter-spacing:-1.2px;white-space:pre;color:#bcbec4"><span style="color:#bcbec4;">        weight = </span><span style="color:#2aacb8;">3</span></div>
<div class="abs" style="left:-22.5px;top:510px;width:100px;height:44px;line-height:44px;text-align:right;font-family:'Liberation Mono', monospace;font-size:27.5px;letter-spacing:-1.8px;-webkit-text-stroke:0.1px currentColor;color:#4b5059"><span style="position:relative;top:3px">29</span></div>
<div class="abs" style="left:-22.5px;top:554px;width:100px;height:44px;line-height:44px;text-align:right;font-family:'Liberation Mono', monospace;font-size:27.5px;letter-spacing:-1.8px;-webkit-text-stroke:0.1px currentColor;color:#4b5059"><span style="position:relative;top:3px">30</span></div>
<div class="abs" style="left:155px;top:557.5px;height:44px;line-height:44px;font-family:'Liberation Mono', monospace;font-size:28px;letter-spacing:-1.2px;white-space:pre;color:#bcbec4"><span style="color:#bcbec4;">    </span><span style="color:#c77dbb;font-style:italic;">strings</span><span style="color:#bcbec4;">:</span></div>
<div class="abs" style="left:-22.5px;top:598px;width:100px;height:44px;line-height:44px;text-align:right;font-family:'Liberation Mono', monospace;font-size:27.5px;letter-spacing:-1.8px;-webkit-text-stroke:0.1px currentColor;color:#4b5059"><span style="position:relative;top:3px">31</span></div>
<div class="abs" style="left:155px;top:601.5px;height:44px;line-height:44px;font-family:'Liberation Mono', monospace;font-size:28px;letter-spacing:-1.2px;white-space:pre;color:#bcbec4"><span style="color:#c77dbb;">        $magic</span><span style="color:#bcbec4;"> = </span><span style="color:#6aab73;">{ 25 50 44 46 }</span></div>
<div class="abs" style="left:-22.5px;top:642px;width:100px;height:44px;line-height:44px;text-align:right;font-family:'Liberation Mono', monospace;font-size:27.5px;letter-spacing:-1.8px;-webkit-text-stroke:0.1px currentColor;color:#4b5059"><span style="position:relative;top:3px">32</span></div>
<div class="abs" style="left:404.60px;top:642px;width:109.20px;height:44px;background:#293335"></div>
<div class="abs" style="left:513.80px;top:642px;width:31.20px;height:44px;background:#293335"></div>
<div class="abs" style="left:545.00px;top:642px;width:15.60px;height:44px;background:#293335"></div>
<div class="abs" style="left:560.60px;top:642px;width:15.60px;height:44px;background:#293335"></div>
<div class="abs" style="left:576.20px;top:642px;width:15.60px;height:44px;background:#293335"></div>
<div class="abs" style="left:155px;top:645.5px;height:44px;line-height:44px;font-family:'Liberation Mono', monospace;font-size:28px;letter-spacing:-1.2px;white-space:pre;color:#bcbec4"><span style="color:#c77dbb;">        $ver</span><span style="color:#bcbec4;"> = </span><span style="color:#6aab73;">/</span><span style="color:#6aab73;">%PDF-1.</span><span style="color:#d5b778;font-weight:bold;">\d</span><span style="color:#bcbec4;">{</span><span style="color:#2aacb8;">1</span><span style="color:#bcbec4;">}</span><span style="color:#6aab73;">/</span></div>
<div class="abs" style="left:-22.5px;top:686px;width:100px;height:44px;line-height:44px;text-align:right;font-family:'Liberation Mono', monospace;font-size:27.5px;letter-spacing:-1.8px;-webkit-text-stroke:0.1px currentColor;color:#4b5059"><span style="position:relative;top:3px">33</span></div>
<div class="abs" style="left:155px;top:689.5px;height:44px;line-height:44px;font-family:'Liberation Mono', monospace;font-size:28px;letter-spacing:-1.2px;white-space:pre;color:#bcbec4"><span style="color:#bcbec4;">    </span><span style="color:#c77dbb;font-style:italic;">condition</span><span style="color:#bcbec4;">:</span></div>
<div class="abs" style="left:-22.5px;top:730px;width:100px;height:44px;line-height:44px;text-align:right;font-family:'Liberation Mono', monospace;font-size:27.5px;letter-spacing:-1.8px;-webkit-text-stroke:0.1px currentColor;color:#a1a3ab"><span style="position:relative;top:3px">34</span></div>
<div class="abs" style="left:155px;top:733.5px;height:44px;line-height:44px;font-family:'Liberation Mono', monospace;font-size:28px;letter-spacing:-1.2px;white-space:pre;color:#bcbec4"><span style="color:#c77dbb;">        $magic</span><span style="color:#bcbec4;"> </span><span style="color:#cf8e6d;">in</span><span style="color:#bcbec4;"> (</span><span style="color:#2aacb8;">0</span><span style="color:#bcbec4;">..</span><span style="color:#2aacb8;">1024</span><span style="color:#bcbec4;">) </span><span style="color:#cf8e6d;">and</span><span style="color:#bcbec4;"> </span><span style="color:#cf8e6d;">not</span><span style="color:#bcbec4;"> </span><span style="color:#c77dbb;">$ver</span><span style="color:#bcbec4;"> </span><span style="color:#cf8e6d;">and</span><span style="color:#bcbec4;"> suspicious_cre</span></div>
<div class="abs" style="left:-22.5px;top:774px;width:100px;height:44px;line-height:44px;text-align:right;font-family:'Liberation Mono', monospace;font-size:27.5px;letter-spacing:-1.8px;-webkit-text-stroke:0.1px currentColor;color:#4b5059"><span style="position:relative;top:3px">35</span></div>
<div class="abs" style="left:155px;top:777.5px;height:44px;line-height:44px;font-family:'Liberation Mono', monospace;font-size:28px;letter-spacing:-1.2px;white-space:pre;color:#bcbec4"><span style="color:#bcbec4;">}</span></div>
<div class="abs" style="left:-22.5px;top:818px;width:100px;height:44px;line-height:44px;text-align:right;font-family:'Liberation Mono', monospace;font-size:27.5px;letter-spacing:-1.8px;-webkit-text-stroke:0.1px currentColor;color:#4b5059"><span style="position:relative;top:3px">36</span></div>
<div class="abs" style="left:-22.5px;top:862px;width:100px;height:44px;line-height:44px;text-align:right;font-family:'Liberation Mono', monospace;font-size:27.5px;letter-spacing:-1.8px;-webkit-text-stroke:0.1px currentColor;color:#4b5059"><span style="position:relative;top:3px">37</span></div>
<div class="abs" style="left:155px;top:865.5px;height:44px;line-height:44px;font-family:'Liberation Mono', monospace;font-size:28px;letter-spacing:-1.2px;white-space:pre;color:#bcbec4"><span style="color:#cf8e6d;">rule</span><span style="color:#bcbec4;"> suspicious_creation : PDF raw</span></div>
<div class="abs" style="left:-22.5px;top:906px;width:100px;height:44px;line-height:44px;text-align:right;font-family:'Liberation Mono', monospace;font-size:27.5px;letter-spacing:-1.8px;-webkit-text-stroke:0.1px currentColor;color:#4b5059"><span style="position:relative;top:3px">38</span></div>
<div class="abs" style="left:155px;top:909.5px;height:44px;line-height:44px;font-family:'Liberation Mono', monospace;font-size:28px;letter-spacing:-1.2px;white-space:pre;color:#bcbec4"><span style="color:#bcbec4;">{</span></div>
<div class="abs" style="left:-22.5px;top:950px;width:100px;height:44px;line-height:44px;text-align:right;font-family:'Liberation Mono', monospace;font-size:27.5px;letter-spacing:-1.8px;-webkit-text-stroke:0.1px currentColor;color:#4b5059"><span style="position:relative;top:3px">39</span></div>
<div class="abs" style="left:155px;top:953.5px;height:44px;line-height:44px;font-family:'Liberation Mono', monospace;font-size:28px;letter-spacing:-1.2px;white-space:pre;color:#bcbec4"><span style="color:#bcbec4;">    </span><span style="color:#c77dbb;font-style:italic;">meta</span><span style="color:#bcbec4;">:</span></div>
<div class="abs" style="left:-22.5px;top:994px;width:100px;height:44px;line-height:44px;text-align:right;font-family:'Liberation Mono', monospace;font-size:27.5px;letter-spacing:-1.8px;-webkit-text-stroke:0.1px currentColor;color:#4b5059"><span style="position:relative;top:3px">40</span></div>
<div class="abs" style="left:155px;top:997.5px;height:44px;line-height:44px;font-family:'Liberation Mono', monospace;font-size:28px;letter-spacing:-1.2px;white-space:pre;color:#bcbec4"><span style="color:#bcbec4;">        author = </span><span style="color:#6aab73;">&quot;Glenn Edwards (@hiddenillusion)&quot;</span></div>
<div class="abs" style="left:-22.5px;top:1038px;width:100px;height:44px;line-height:44px;text-align:right;font-family:'Liberation Mono', monospace;font-size:27.5px;letter-spacing:-1.8px;-webkit-text-stroke:0.1px currentColor;color:#4b5059"><span style="position:relative;top:3px">41</span></div>
<div class="abs" style="left:155px;top:1041.5px;height:44px;line-height:44px;font-family:'Liberation Mono', monospace;font-size:28px;letter-spacing:-1.2px;white-space:pre;color:#bcbec4"><span style="color:#bcbec4;">        version = </span><span style="color:#6aab73;">&quot;0.1&quot;</span></div>
<div class="abs" style="left:-22.5px;top:1082px;width:100px;height:44px;line-height:44px;text-align:right;font-family:'Liberation Mono', monospace;font-size:27.5px;letter-spacing:-1.8px;-webkit-text-stroke:0.1px currentColor;color:#4b5059"><span style="position:relative;top:3px">42</span></div>
<div class="abs" style="left:155px;top:1085.5px;height:44px;line-height:44px;font-family:'Liberation Mono', monospace;font-size:28px;letter-spacing:-1.2px;white-space:pre;color:#bcbec4"><span style="color:#bcbec4;">        weight = </span><span style="color:#2aacb8;">2</span></div>
<div class="abs" style="left:-22.5px;top:1126px;width:100px;height:44px;line-height:44px;text-align:right;font-family:'Liberation Mono', monospace;font-size:27.5px;letter-spacing:-1.8px;-webkit-text-stroke:0.1px currentColor;color:#4b5059"><span style="position:relative;top:3px">43</span></div>
<div class="abs" style="left:-22.5px;top:1170px;width:100px;height:44px;line-height:44px;text-align:right;font-family:'Liberation Mono', monospace;font-size:27.5px;letter-spacing:-1.8px;-webkit-text-stroke:0.1px currentColor;color:#4b5059"><span style="position:relative;top:3px">44</span></div>
<div class="abs" style="left:155px;top:1173.5px;height:44px;line-height:44px;font-family:'Liberation Mono', monospace;font-size:28px;letter-spacing:-1.2px;white-space:pre;color:#bcbec4"><span style="color:#bcbec4;">    </span><span style="color:#c77dbb;font-style:italic;">strings</span><span style="color:#bcbec4;">:</span></div>
<div class="abs" style="left:-22.5px;top:1214px;width:100px;height:44px;line-height:44px;text-align:right;font-family:'Liberation Mono', monospace;font-size:27.5px;letter-spacing:-1.8px;-webkit-text-stroke:0.1px currentColor;color:#4b5059"><span style="position:relative;top:3px">45</span></div>
<div class="abs" style="left:155px;top:1217.5px;height:44px;line-height:44px;font-family:'Liberation Mono', monospace;font-size:28px;letter-spacing:-1.2px;white-space:pre;color:#bcbec4"><span style="color:#c77dbb;">        $magic</span><span style="color:#bcbec4;"> = </span><span style="color:#6aab73;">{ 25 50 44 46 }</span></div>
<div class="abs" style="left:-22.5px;top:1258px;width:100px;height:44px;line-height:44px;text-align:right;font-family:'Liberation Mono', monospace;font-size:27.5px;letter-spacing:-1.8px;-webkit-text-stroke:0.1px currentColor;color:#4b5059"><span style="position:relative;top:3px">46</span></div>
<div class="abs" style="left:451.40px;top:1258px;width:93.60px;height:44px;background:#293335"></div>
<div class="abs" style="left:545.00px;top:1258px;width:15.60px;height:44px;background:#293335"></div>
<div class="abs" style="left:560.60px;top:1258px;width:15.60px;height:44px;background:#293335"></div>
<div class="abs" style="left:576.20px;top:1258px;width:15.60px;height:44px;background:#293335"></div>
<div class="abs" style="left:591.80px;top:1258px;width:15.60px;height:44px;background:#293335"></div>
<div class="abs" style="left:607.40px;top:1258px;width:15.60px;height:44px;background:#293335"></div>
<div class="abs" style="left:623.00px;top:1258px;width:15.60px;height:44px;background:#293335"></div>
<div class="abs" style="left:638.60px;top:1258px;width:15.60px;height:44px;background:#293335"></div>
<div class="abs" style="left:654.20px;top:1258px;width:15.60px;height:44px;background:#293335"></div>
<div class="abs" style="left:669.80px;top:1258px;width:15.60px;height:44px;background:#293335"></div>
<div class="abs" style="left:155px;top:1261.5px;height:44px;line-height:44px;font-family:'Liberation Mono', monospace;font-size:28px;letter-spacing:-1.2px;white-space:pre;color:#bcbec4"><span style="color:#c77dbb;">        $header</span><span style="color:#bcbec4;"> = </span><span style="color:#6aab73;">/</span><span style="color:#6aab73;">%PDF-1</span><span style="color:#cf8e6d;">\</span><span style="color:#bcbec4;">.</span><span style="color:#bcbec4;">(</span><span style="color:#6aab73;">3</span><span style="color:#cf8e6d;">|</span><span style="color:#6aab73;">4</span><span style="color:#cf8e6d;">|</span><span style="color:#6aab73;">6</span><span style="color:#bcbec4;">)</span><span style="color:#6aab73;">/</span></div>
<div class="abs" style="left:-22.5px;top:1302px;width:100px;height:44px;line-height:44px;text-align:right;font-family:'Liberation Mono', monospace;font-size:27.5px;letter-spacing:-1.8px;-webkit-text-stroke:0.1px currentColor;color:#4b5059"><span style="position:relative;top:3px">47</span></div>
<div class="abs" style="left:-22.5px;top:1346px;width:100px;height:44px;line-height:44px;text-align:right;font-family:'Liberation Mono', monospace;font-size:27.5px;letter-spacing:-1.8px;-webkit-text-stroke:0.1px currentColor;color:#4b5059"><span style="position:relative;top:3px">48</span></div>
<div class="abs" style="left:467.00px;top:1346px;width:202.80px;height:44px;background:#293335"></div>
<div class="abs" style="left:669.80px;top:1346px;width:31.20px;height:44px;background:#293335"></div>
<div class="abs" style="left:701.00px;top:1346px;width:249.60px;height:44px;background:#293335"></div>
<div class="abs" style="left:950.60px;top:1346px;width:31.20px;height:44px;background:#293335"></div>
<div class="abs" style="left:155px;top:1349.5px;height:44px;line-height:44px;font-family:'Liberation Mono', monospace;font-size:28px;letter-spacing:-1.2px;white-space:pre;color:#bcbec4"><span style="color:#c77dbb;">        $create0</span><span style="color:#bcbec4;"> = </span><span style="color:#6aab73;">/</span><span style="color:#6aab73;">CreationDate </span><span style="color:#cf8e6d;">\(</span><span style="color:#6aab73;">D:20101015142358</span><span style="color:#cf8e6d;">\)</span><span style="color:#6aab73;">/</span></div>
<div class="abs" style="left:-22.5px;top:1390px;width:100px;height:44px;line-height:44px;text-align:right;font-family:'Liberation Mono', monospace;font-size:27.5px;letter-spacing:-1.8px;-webkit-text-stroke:0.1px currentColor;color:#4b5059"><span style="position:relative;top:3px">49</span></div>
<div class="abs" style="left:467.00px;top:1390px;width:202.80px;height:44px;background:#293335"></div>
<div class="abs" style="left:669.80px;top:1390px;width:31.20px;height:44px;background:#293335"></div>
<div class="abs" style="left:701.00px;top:1390px;width:202.80px;height:44px;background:#293335"></div>
<div class="abs" style="left:903.80px;top:1390px;width:31.20px;height:44px;background:#293335"></div>
<div class="abs" style="left:155px;top:1393.5px;height:44px;line-height:44px;font-family:'Liberation Mono', monospace;font-size:28px;letter-spacing:-1.2px;white-space:pre;color:#bcbec4"><span style="color:#c77dbb;">        $create1</span><span style="color:#bcbec4;"> = </span><span style="color:#6aab73;">/</span><span style="color:#6aab73;">CreationDate </span><span style="color:#cf8e6d;">\(</span><span style="color:#6aab73;">2008312053854</span><span style="color:#cf8e6d;">\)</span><span style="color:#6aab73;">/</span></div>
<div class="abs" style="left:-22.5px;top:1434px;width:100px;height:44px;line-height:44px;text-align:right;font-family:'Liberation Mono', monospace;font-size:27.5px;letter-spacing:-1.8px;-webkit-text-stroke:0.1px currentColor;color:#4b5059"><span style="position:relative;top:3px">50</span></div>
<div class="abs" style="left:155px;top:1437.5px;height:44px;line-height:44px;font-family:'Liberation Mono', monospace;font-size:28px;letter-spacing:-1.2px;white-space:pre;color:#bcbec4"><span style="color:#bcbec4;">    </span><span style="color:#c77dbb;font-style:italic;">condition</span><span style="color:#bcbec4;">:</span></div>
<div class="abs" style="left:-22.5px;top:1478px;width:100px;height:44px;line-height:44px;text-align:right;font-family:'Liberation Mono', monospace;font-size:27.5px;letter-spacing:-1.8px;-webkit-text-stroke:0.1px currentColor;color:#4b5059"><span style="position:relative;top:3px">51</span></div>
<div class="abs" style="left:155px;top:1481.5px;height:44px;line-height:44px;font-family:'Liberation Mono', monospace;font-size:28px;letter-spacing:-1.2px;white-space:pre;color:#bcbec4"><span style="color:#c77dbb;">        $magic</span><span style="color:#bcbec4;"> </span><span style="color:#cf8e6d;">in</span><span style="color:#bcbec4;"> (</span><span style="color:#2aacb8;">0</span><span style="color:#bcbec4;">..</span><span style="color:#2aacb8;">1024</span><span style="color:#bcbec4;">) </span><span style="color:#cf8e6d;">and</span><span style="color:#bcbec4;"> </span><span style="color:#c77dbb;">$header</span><span style="color:#bcbec4;"> </span><span style="color:#cf8e6d;">and</span><span style="color:#bcbec4;"> </span><span style="color:#2aacb8;">1</span><span style="color:#bcbec4;"> </span><span style="color:#cf8e6d;">of</span><span style="color:#bcbec4;"> (</span><span style="color:#c77dbb;">$create*</span><span style="color:#bcbec4;">)</span></div>
<div class="abs" style="left:-22.5px;top:1522px;width:100px;height:44px;line-height:44px;text-align:right;font-family:'Liberation Mono', monospace;font-size:27.5px;letter-spacing:-1.8px;-webkit-text-stroke:0.1px currentColor;color:#4b5059"><span style="position:relative;top:3px">52</span></div>
<div class="abs" style="left:155px;top:1525.5px;height:44px;line-height:44px;font-family:'Liberation Mono', monospace;font-size:28px;letter-spacing:-1.2px;white-space:pre;color:#bcbec4"><span style="color:#bcbec4;">}</span></div>
<div class="abs" style="left:-22.5px;top:1566px;width:100px;height:44px;line-height:44px;text-align:right;font-family:'Liberation Mono', monospace;font-size:27.5px;letter-spacing:-1.8px;-webkit-text-stroke:0.1px currentColor;color:#4b5059"><span style="position:relative;top:3px">53</span></div>
<div class="abs" style="left:-22.5px;top:1610px;width:100px;height:44px;line-height:44px;text-align:right;font-family:'Liberation Mono', monospace;font-size:27.5px;letter-spacing:-1.8px;-webkit-text-stroke:0.1px currentColor;color:#4b5059"><span style="position:relative;top:3px">54</span></div>
<div class="abs" style="left:155px;top:1613.5px;height:44px;line-height:44px;font-family:'Liberation Mono', monospace;font-size:28px;letter-spacing:-1.2px;white-space:pre;color:#bcbec4"><span style="color:#cf8e6d;">rule</span><span style="color:#bcbec4;"> multiple_filtering : PDF raw</span></div>
<div class="abs" style="left:-22.5px;top:1654px;width:100px;height:44px;line-height:44px;text-align:right;font-family:'Liberation Mono', monospace;font-size:27.5px;letter-spacing:-1.8px;-webkit-text-stroke:0.1px currentColor;color:#4b5059"><span style="position:relative;top:3px">55</span></div>
<div class="abs" style="left:155px;top:1657.5px;height:44px;line-height:44px;font-family:'Liberation Mono', monospace;font-size:28px;letter-spacing:-1.2px;white-space:pre;color:#bcbec4"><span style="color:#bcbec4;">{</span></div>
<div class="abs" style="left:-22.5px;top:1698px;width:100px;height:44px;line-height:44px;text-align:right;font-family:'Liberation Mono', monospace;font-size:27.5px;letter-spacing:-1.8px;-webkit-text-stroke:0.1px currentColor;color:#4b5059"><span style="position:relative;top:3px">56</span></div>
<div class="abs" style="left:155px;top:1701.5px;height:44px;line-height:44px;font-family:'Liberation Mono', monospace;font-size:28px;letter-spacing:-1.2px;white-space:pre;color:#bcbec4"><span style="color:#c77dbb;font-style:italic;">meta</span><span style="color:#bcbec4;">:</span></div>
<div class="abs" style="left:-22.5px;top:1742px;width:100px;height:44px;line-height:44px;text-align:right;font-family:'Liberation Mono', monospace;font-size:27.5px;letter-spacing:-1.8px;-webkit-text-stroke:0.1px currentColor;color:#4b5059"><span style="position:relative;top:3px">57</span></div>
<div class="abs" style="left:155px;top:1745.5px;height:44px;line-height:44px;font-family:'Liberation Mono', monospace;font-size:28px;letter-spacing:-1.2px;white-space:pre;color:#bcbec4"><span style="color:#bcbec4;">        author = </span><span style="color:#6aab73;">&quot;Glenn Edwards (@hiddenillusion)&quot;</span></div>
<div class="abs" style="left:214px;top:-18px;width:2px;height:88px;background:#2f3135"></div>
<div class="abs" style="left:214px;top:114px;width:2px;height:44px;background:#2f3135"></div>
<div class="abs" style="left:214px;top:378px;width:2px;height:132px;background:#2f3135"></div>
<div class="abs" style="left:214px;top:598px;width:2px;height:88px;background:#2f3135"></div>
<div class="abs" style="left:214px;top:730px;width:2px;height:44px;background:#2f3135"></div>
<div class="abs" style="left:214px;top:994px;width:2px;height:132px;background:#2f3135"></div>
<div class="abs" style="left:214px;top:1214px;width:2px;height:220px;background:#2f3135"></div>
<div class="abs" style="left:214px;top:1478px;width:2px;height:44px;background:#2f3135"></div>
<div class="abs" style="left:16px;top:732px;width:8px;height:40px;border-radius:3px;background:#3459a8"></div>
<div class="abs" style="left:1075px;top:734px;width:3.5px;height:36px;background:#ced0d6"></div>
<svg style="left:545.0px;top:679px" width="46.799999999999955" height="5"><path d="M0 3 L3.0 0 L6.0 3 L9.0 0 L12.0 3 L15.0 0 L18.0 3 L21.0 0 L24.0 3 L27.0 0 L30.0 3 L33.0 0 L36.0 3 L39.0 0 L42.0 3 L45.0 0 L48.0 3 " fill="none" stroke="#a58a47" stroke-width="1.4"/></svg>
<svg style="left:591.8px;top:1295px" width="78.0" height="5"><path d="M0 3 L3.0 0 L6.0 3 L9.0 0 L12.0 3 L15.0 0 L18.0 3 L21.0 0 L24.0 3 L27.0 0 L30.0 3 L33.0 0 L36.0 3 L39.0 0 L42.0 3 L45.0 0 L48.0 3 L51.0 0 L54.0 3 L57.0 0 L60.0 3 L63.0 0 L66.0 3 L69.0 0 L72.0 3 L75.0 0 L78.0 3 " fill="none" stroke="#a58a47" stroke-width="1.4"/></svg>
<svg style="left:1938px;top:13px" width="26" height="24" viewBox="0 0 26 24"><path d="M13 1.5 Q14.5 1.5 15.5 3.2 L24.5 19.5 Q25.5 22.5 22.5 22.5 H3.5 Q0.5 22.5 1.5 19.5 L10.5 3.2 Q11.5 1.5 13 1.5 Z" fill="#c8a35a"/><path d="M13 7 V14" stroke="#1c1d1f" stroke-width="3" stroke-linecap="round"/><circle cx="13" cy="18.3" r="1.8" fill="#1c1d1f"/></svg>
<div style="position:absolute;left:1969px;top:9.49px;height:34px;line-height:34px;font-family:'Liberation Sans', sans-serif;font-size:26px;color:#9fa2a8;font-weight:normal;white-space:pre;letter-spacing:-0.65px;">44</div>
<svg style="left:2012px;top:13px" width="26" height="24" viewBox="0 0 26 24"><path d="M13 1.5 Q14.5 1.5 15.5 3.2 L24.5 19.5 Q25.5 22.5 22.5 22.5 H3.5 Q0.5 22.5 1.5 19.5 L10.5 3.2 Q11.5 1.5 13 1.5 Z" fill="#87714a"/><path d="M13 7 V14" stroke="#1c1d1f" stroke-width="3" stroke-linecap="round"/><circle cx="13" cy="18.3" r="1.8" fill="#1c1d1f"/></svg>
<div style="position:absolute;left:2041px;top:9.49px;height:34px;line-height:34px;font-family:'Liberation Sans', sans-serif;font-size:26px;color:#9fa2a8;font-weight:normal;white-space:pre;letter-spacing:-0.65px;">1</div>
<svg style="left:2073px;top:21px" width="18" height="10"><polyline points="1.5,8.5 9,1.5 16.5,8.5" fill="none" stroke="#ced0d6" stroke-width="2" stroke-linecap="round" stroke-linejoin="round"/></svg>
<svg style="left:2115px;top:21px" width="18" height="10"><polyline points="1.5,1.5 9,8.5 16.5,1.5" fill="none" stroke="#ced0d6" stroke-width="2" stroke-linecap="round" stroke-linejoin="round"/></svg>
<div class="abs" style="left:2126px;top:112px;width:16px;height:128px;border-radius:8px;background:#3a3b3e"></div>
<div class="abs" style="left:2112px;top:162px;width:4px;height:10px;background:#3f5f8f"></div>
<div class="abs" style="left:2120px;top:206px;width:28px;height:4px;background:#b8974f"></div>
<div class="abs" style="left:2120px;top:264px;width:28px;height:4px;background:#b8974f"></div>
<div class="abs" style="left:2120px;top:320px;width:28px;height:4px;background:#b8974f"></div>
<div class="abs" style="left:2120px;top:382px;width:28px;height:4px;background:#b8974f"></div>
<div class="abs" style="left:2120px;top:446px;width:28px;height:4px;background:#b8974f"></div>
<div class="abs" style="left:2120px;top:504px;width:28px;height:4px;background:#b8974f"></div>
<div class="abs" style="left:2120px;top:570px;width:28px;height:12px;background:#b8974f"></div>
<div class="abs" style="left:2120px;top:584px;width:28px;height:4px;background:#b8974f"></div>
<div class="abs" style="left:2120px;top:656px;width:28px;height:22px;background:#b8974f"></div>
<div class="abs" style="left:2120px;top:728px;width:28px;height:8px;background:#b8974f"></div>
<div class="abs" style="left:2120px;top:800px;width:28px;height:18px;background:#b8974f"></div>
<div class="abs" style="left:2120px;top:872px;width:28px;height:18px;background:#b8974f"></div>
<div class="abs" style="left:2120px;top:938px;width:28px;height:4px;background:#b8974f"></div>
<div class="abs" style="left:2120px;top:1004px;width:28px;height:6px;background:#b8974f"></div>
<div class="abs" style="left:2120px;top:1062px;width:28px;height:8px;background:#b8974f"></div>
<div class="abs" style="left:2120px;top:1182px;width:28px;height:4px;background:#b8974f"></div>
<div class="abs" style="left:2120px;top:1244px;width:28px;height:4px;background:#b8974f"></div>
<div class="abs" style="left:2120px;top:1306px;width:28px;height:4px;background:#b8974f"></div>
<div class="abs" style="left:2120px;top:1368px;width:28px;height:4px;background:#b8974f"></div>
<div class="abs" style="left:2120px;top:1484px;width:28px;height:4px;background:#b8974f"></div>
<div class="abs" style="left:155.5px;top:1754px;width:1992.5px;height:29px;background:#313436"></div>
<div class="abs" style="left:161px;top:1759px;width:851px;height:17.5px;border-radius:9px;background:#4a4c50"></div>
<div class="abs" style="left:836px;top:774px;width:579px;height:164px;border-radius:14px;background:#27282a;box-shadow:0 0 0 2px #3d3f43 inset;overflow:hidden">
<div class="abs" style="left:0;top:110px;width:579px;height:54px;background:#323337"></div>
<div class="abs" style="left:8px;top:8px;width:564px;height:48px;border-radius:8px;background:#2e436e"></div>
<div class="abs" style="left:0;top:0;width:579px;height:164px;border-radius:14px;box-shadow:0 0 0 2px #3d3f43 inset"></div>
</div>
<div class="abs" style="left:858px;top:785.0px;height:48px;line-height:48px;font-family:'Liberation Mono', monospace;font-size:28px;letter-spacing:-1.2px;white-space:pre"><span style="color:#548af7">suspicious_cre</span><span style="color:#dfe1e5">ator</span></div>
<div class="abs" style="left:858px;top:833.0px;height:48px;line-height:48px;font-family:'Liberation Mono', monospace;font-size:28px;letter-spacing:-1.2px;white-space:pre"><span style="color:#548af7">suspicious_cre</span><span style="color:#dfe1e5">ation</span></div>
<div style="position:absolute;left:861px;top:893.99px;height:34px;line-height:34px;font-family:'Liberation Sans', sans-serif;font-size:26px;color:#74787e;font-weight:normal;white-space:pre;letter-spacing:-0.6px;">Press</div>
<div style="position:absolute;left:960px;top:893.99px;height:34px;line-height:34px;font-family:'Liberation Sans', sans-serif;font-size:26px;color:#74787e;font-weight:normal;white-space:pre;letter-spacing:-0.1px;">to insert,</div>
<div style="position:absolute;left:1097.6px;top:893.99px;height:34px;line-height:34px;font-family:'Liberation Sans', sans-serif;font-size:26px;color:#74787e;font-weight:normal;white-space:pre;letter-spacing:-0.2px;">to replace</div>
<svg style="left:929px;top:901px" width="26" height="20"><path d="M21.5 2 V11 H4 M9 6 L4 11 L9 16" fill="none" stroke="#74787e" stroke-width="2.4" stroke-linecap="round" stroke-linejoin="round"/></svg>
<svg style="left:1066px;top:904px" width="26" height="16"><path d="M3 8.5 H18 M13 3.5 L18 8.5 L13 13.5 M22.5 2.5 V14" fill="none" stroke="#74787e" stroke-width="2.4" stroke-linecap="round" stroke-linejoin="round"/></svg>
<div class="abs" style="left:1377.8px;top:898.3px;width:4.4px;height:4.4px;border-radius:50%;background:#ced0d6"></div>
<div class="abs" style="left:1377.8px;top:909.3px;width:4.4px;height:4.4px;border-radius:50%;background:#ced0d6"></div>
<div class="abs" style="left:1377.8px;top:920.3px;width:4.4px;height:4.4px;border-radius:50%;background:#ced0d6"></div>
</div>
<div class="abs" style="left:2924px;top:86px;width:2px;height:1866px;background:#1c1d1f"></div>
<svg style="left:2940px;top:100px" width="50" height="50" viewBox="0 0 50 50"><g fill="none" stroke="#ced0d6" stroke-width="2.7" stroke-linejoin="round" stroke-linecap="round">
<path d="M29.3 9.6 C21 9.6 15.4 13 15.4 19 V26.7 L11 35.5 H41.3 L36.4 25.7 V22.6"/></g><path d="M21.7 40 A4.25 4.25 0 0 0 30.2 40 Z" fill="#ced0d6"/></svg>
<div class="abs" style="left:2971.8px;top:105.7px;width:14.2px;height:14.2px;border-radius:50%;background:#4a80e8"></div>
<svg style="left:2950px;top:190px" width="32" height="32" viewBox="0 0 32 32"><g fill="none" stroke="#ced0d6" stroke-width="2.7" stroke-linecap="round">
<path d="M3.3 3.6 C8 1 20 0 27 6 C33 11 32 20 24 23 C17 25 11 23 9.5 18.5 C8.5 15 12 13.5 15.8 15.5"/>
<path d="M29.2 28.3 C24 31 12 32 5 26 C-1 21 0 12 8 9 C14 7 21 8 22.8 12.5 C24 16 20 18.5 15.8 16.3"/></g></svg>
<svg style="left:2948px;top:266px" width="36" height="40" viewBox="0 0 36 40"><g fill="none" stroke="#ced0d6" stroke-width="2.7">
<ellipse cx="18" cy="9" rx="14.5" ry="5.8"/><path d="M3.5 9 V30.9 A14.5 5.8 0 0 0 32.5 30.9 V9 M3.5 16.2 A14.5 5.8 0 0 0 32.5 16.2 M3.5 23.5 A14.5 5.8 0 0 0 32.5 23.5"/></g></svg>
<div class="abs" style="left:0;top:1950px;width:3018px;height:2px;background:#1c1d1f"></div>
<div class="abs" style="left:34px;top:1972px;width:16px;height:16px;border-radius:4px;background:#1f2a44;box-shadow:0 0 0 2.2px #548af7 inset"></div>
<div style="position:absolute;left:58.7px;top:1961.14px;height:35px;line-height:35px;font-family:'Liberation Sans', sans-serif;font-size:27px;color:#95989d;font-weight:normal;white-space:pre;letter-spacing:-0.1px;">rules</div>
<svg style="left:136px;top:1971px" width="12" height="18"><polyline points="2,2 10,9 2,16" fill="none" stroke="#95989d" stroke-width="2" stroke-linecap="round" stroke-linejoin="round"/></svg>
<div style="position:absolute;left:167px;top:1961.14px;height:35px;line-height:35px;font-family:'Liberation Sans', sans-serif;font-size:27px;color:#95989d;font-weight:normal;white-space:pre;letter-spacing:0px;">maldocs</div>
<svg style="left:288.5px;top:1971px" width="12" height="18"><polyline points="2,2 10,9 2,16" fill="none" stroke="#95989d" stroke-width="2" stroke-linecap="round" stroke-linejoin="round"/></svg>
<svg style="left:322.5px;top:1969px" width="24" height="24" viewBox="0 0 24 24"><path d="M0 0 H6.2 L12 7.6 L17.8 0 H24 L14.1 13 V24 H9.9 V13 Z" fill="#6c6d6f"/></svg>
<div style="position:absolute;left:358.5px;top:1961.14px;height:35px;line-height:35px;font-family:'Liberation Sans', sans-serif;font-size:27px;color:#95989d;font-weight:normal;white-space:pre;letter-spacing:0px;">Maldoc_PDF.yar</div>
<div style="position:absolute;left:2505.5px;top:1961.14px;height:35px;line-height:35px;font-family:'Liberation Sans', sans-serif;font-size:27px;color:#95989d;font-weight:normal;white-space:pre;letter-spacing:0px;">34:60</div>
<div style="position:absolute;left:2609.6px;top:1961.14px;height:35px;line-height:35px;font-family:'Liberation Sans', sans-serif;font-size:27px;color:#95989d;font-weight:normal;white-space:pre;letter-spacing:0px;">LF</div>
<div style="position:absolute;left:2671.6px;top:1961.14px;height:35px;line-height:35px;font-family:'Liberation Sans', sans-serif;font-size:27px;color:#95989d;font-weight:normal;white-space:pre;letter-spacing:0px;">UTF-8</div>
<div style="position:absolute;left:2783px;top:1961.14px;height:35px;line-height:35px;font-family:'Liberation Sans', sans-serif;font-size:27px;color:#95989d;font-weight:normal;white-space:pre;letter-spacing:0px;">Tab*</div>
<svg style="left:2879px;top:1966px" width="30" height="30" viewBox="0 0 30 30"><g fill="none" stroke="#ced0d6" stroke-width="2.2" stroke-linecap="round" stroke-linejoin="round">
<rect x="2" y="12" width="18" height="14" rx="2.5"/><path d="M16 12 V8 Q16 2.5 21 2.5 Q26 2.5 26 8 V10"/><path d="M11 17 V21"/></g></svg>
<svg style="left:2939px;top:1965px" width="30" height="30" viewBox="0 0 30 30"><g fill="none" stroke="#ced0d6" stroke-width="2.2" stroke-linecap="round">
<circle cx="15" cy="15" r="13"/><path d="M15 8 V17"/></g><circle cx="15" cy="21.5" r="1.8" fill="#ced0d6"/></svg>
</div>
<div class="abs" style="left:6px;top:4px;width:2999px;height:2005px;box-sizing:border-box;border:1.5px solid #66696f;border-radius:22px;pointer-events:none"></div>
</body></html>
